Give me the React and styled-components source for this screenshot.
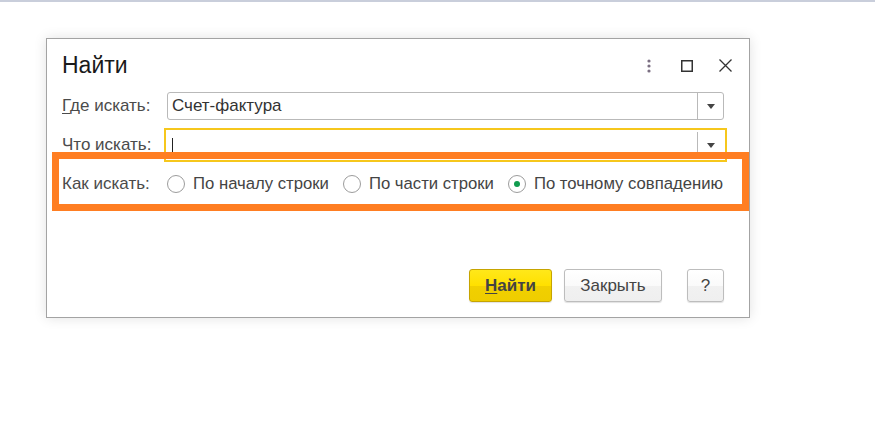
import styled, { createGlobalStyle } from "styled-components";

const GlobalStyle = createGlobalStyle`
  html, body {
    margin: 0;
    padding: 0;
    background: #fff;
  }
  body {
    font-family: "Liberation Sans", Arial, sans-serif;
  }
`;

const Page = styled.div`
  width: 875px;
  height: 433px;
  border-top: 2px solid #c9cedb;
  box-sizing: border-box;
  padding: 36px 0 0 46px;
`;

const Dialog = styled.div`
  position: relative;
  width: 704px;
  height: 280px;
  box-sizing: border-box;
  border: 1px solid #a3a3a3;
  background: #fff;
  box-shadow: 0 0 12px rgba(0, 0, 0, 0.12);
  display: flex;
  flex-direction: column;
`;

const Header = styled.div`
  height: 53px;
  display: flex;
  align-items: center;
  padding: 0 17px 0 15px;
`;

const Title = styled.div`
  flex: 1;
  font-size: 23px;
  color: #1a1a1a;
`;

const HeaderIcons = styled.div`
  display: flex;
  align-items: center;
  gap: 24px;
`;

const IconBox = styled.div`
  width: 14px;
  height: 14px;
  display: flex;
  align-items: center;
  justify-content: center;
`;

const Form = styled.div`
  display: flex;
  flex-direction: column;
  gap: 11px;
  padding: 0 25px 0 15px;
`;

const Row = styled.div`
  height: 28px;
  display: flex;
  align-items: center;
`;

const Label = styled.div`
  width: 105px;
  flex: none;
  font-size: 17px;
  color: #4b4b4b;
  white-space: nowrap;
`;

const Mn = styled.span`
  text-decoration: underline;
  text-underline-offset: 2px;
`;

const Field = styled.div`
  flex: 1;
  height: 28px;
  box-sizing: border-box;
  display: flex;
  border: 1px solid ${(p) => (p.$focused ? "#fff" : "#b9b9b9")};
  border-radius: ${(p) => (p.$focused ? 0 : 3)}px;
  outline: ${(p) => (p.$focused ? "2px solid #f6c71c" : "none")};
  outline-offset: 1px;
  background: #fff;
`;

const FieldText = styled.div`
  flex: 1;
  display: flex;
  align-items: center;
  padding-left: 4px;
  font-size: 17px;
  color: #333;
`;

const Caret = styled.span`
  display: inline-block;
  width: 1px;
  height: 15px;
  background: #222;
`;

const DropButton = styled.div`
  width: 25px;
  border-left: 1px solid #b9b9b9;
  display: flex;
  align-items: center;
  justify-content: center;
`;

const Radios = styled.div`
  display: flex;
  align-items: center;
  gap: 14px;
  white-space: nowrap;
`;

const RadioItem = styled.div`
  display: flex;
  align-items: center;
  gap: 8px;
  font-size: 16.7px;
  color: #444;
`;

const RadioCircle = styled.span`
  width: 18px;
  height: 18px;
  flex: none;
  box-sizing: border-box;
  border: 1px solid #9c9c9c;
  border-radius: 50%;
  display: flex;
  align-items: center;
  justify-content: center;
  background: #fff;

  &::after {
    content: "";
    display: ${(p) => (p.$checked ? "block" : "none")};
    width: 6px;
    height: 6px;
    border-radius: 50%;
    background: #119c4f;
  }
`;

const Buttons = styled.div`
  margin-top: auto;
  padding: 0 25px 15px 0;
  display: flex;
  justify-content: flex-end;
  align-items: center;
`;

const Button = styled.button`
  height: 33px;
  width: ${(p) => p.$w}px;
  margin-left: ${(p) => p.$ml}px;
  box-sizing: border-box;
  border-radius: 3px;
  font-family: "Liberation Sans", Arial, sans-serif;
  font-size: 17px;
  color: #444;
  font-weight: ${(p) => (p.$primary ? 700 : 400)};
  border: 1px solid ${(p) => (p.$primary ? "#c6a400" : "#bdbdbd")};
  background: ${(p) =>
    p.$primary
      ? "linear-gradient(#ffe81a, #ffe000 50%, #f1d000 52%, #efcd00)"
      : "linear-gradient(#ffffff, #fafafa 50%, #f1f1f1 52%, #efefef)"};
  box-shadow: 0 1px 1px rgba(0, 0, 0, 0.12);
  padding: 0;
`;

const Highlight = styled.div`
  position: absolute;
  left: 5px;
  top: 113px;
  width: 697px;
  height: 59px;
  box-sizing: border-box;
  border: 7px solid #ff7e22;
  pointer-events: none;
`;

const Kebab = () => (
  <svg width="4" height="14" viewBox="0 0 4 14">
    <circle cx="2" cy="2" r="1.6" fill="#7b6f82" />
    <circle cx="2" cy="7" r="1.6" fill="#7b6f82" />
    <circle cx="2" cy="12" r="1.6" fill="#7b6f82" />
  </svg>
);

const Maximize = () => (
  <svg width="12" height="12" viewBox="0 0 12 12">
    <rect x="0.75" y="0.75" width="10.5" height="10.5" fill="none" stroke="#333" strokeWidth="1.5" />
  </svg>
);

const Close = () => (
  <svg width="13" height="13" viewBox="0 0 13 13">
    <path d="M0.5 0.5 L12.5 12.5 M12.5 0.5 L0.5 12.5" stroke="#333" strokeWidth="1.3" fill="none" />
  </svg>
);

const Arrow = () => (
  <svg width="8" height="5" viewBox="0 0 8 5">
    <path d="M0 0 H8 L4 5 Z" fill="#444" />
  </svg>
);

const Radio = ({ checked, children }) => (
  <RadioItem>
    <RadioCircle $checked={checked} />
    {children}
  </RadioItem>
);

export default function App() {
  return (
    <>
      <GlobalStyle />
      <Page>
        <Dialog>
          <Header>
            <Title>Найти</Title>
            <HeaderIcons>
              <IconBox>
                <Kebab />
              </IconBox>
              <IconBox>
                <Maximize />
              </IconBox>
              <IconBox>
                <Close />
              </IconBox>
            </HeaderIcons>
          </Header>
          <Form>
            <Row>
              <Label>
                <Mn>Г</Mn>де искать:
              </Label>
              <Field>
                <FieldText>Счет-фактура</FieldText>
                <DropButton>
                  <Arrow />
                </DropButton>
              </Field>
            </Row>
            <Row>
              <Label>
                <Mn>Ч</Mn>то искать:
              </Label>
              <Field $focused>
                <FieldText>
                  <Caret />
                </FieldText>
                <DropButton>
                  <Arrow />
                </DropButton>
              </Field>
            </Row>
            <Row>
              <Label>Как искать:</Label>
              <Radios>
                <Radio>По началу строки</Radio>
                <Radio>По части строки</Radio>
                <Radio checked>По точному совпадению</Radio>
              </Radios>
            </Row>
          </Form>
          <Buttons>
            <Button $primary $w={83} $ml={0}>
              <Mn>Н</Mn>айти
            </Button>
            <Button $w={98} $ml={12}>
              Закрыть
            </Button>
            <Button $w={37} $ml={25}>
              ?
            </Button>
          </Buttons>
          <Highlight />
        </Dialog>
      </Page>
    </>
  );
}
